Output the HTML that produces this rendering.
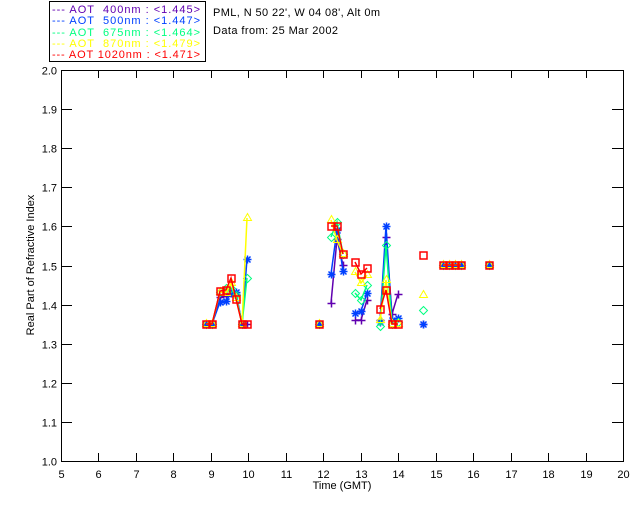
<!DOCTYPE html>
<html><head><meta charset="utf-8"><style>
body{margin:0;background:#fff;width:640px;height:512px;overflow:hidden}
svg{display:block}
text{font-family:"Liberation Sans",sans-serif;font-size:11px}
</style></head><body>
<svg id="s" width="640" height="512" xmlns="http://www.w3.org/2000/svg">
<rect x="49.5" y="1.5" width="156" height="60" fill="none" stroke="#000" stroke-width="1"/>
<g font-size="11">
<text x="52" y="13" fill="#6000b0" textLength="148" lengthAdjust="spacing">--- AOT&#160;&#160;400nm : &lt;1.445&gt;</text>
<text x="52" y="24" fill="#0040ff" textLength="148" lengthAdjust="spacing">--- AOT&#160;&#160;500nm : &lt;1.447&gt;</text>
<text x="52" y="36" fill="#00ff80" textLength="148" lengthAdjust="spacing">--- AOT&#160;&#160;675nm : &lt;1.464&gt;</text>
<text x="52" y="47" fill="#ffff00" textLength="148" lengthAdjust="spacing">--- AOT&#160;&#160;870nm : &lt;1.479&gt;</text>
<text x="52" y="58" fill="#ff0000" textLength="148" lengthAdjust="spacing">--- AOT 1020nm : &lt;1.471&gt;</text>
<text x="213" y="16" fill="#000" textLength="167" lengthAdjust="spacing">PML, N 50 22', W 04 08', Alt 0m</text>
<text x="213" y="34" fill="#000" textLength="125" lengthAdjust="spacing">Data from: 25 Mar 2002</text>
<text x="342" y="489" text-anchor="middle" fill="#000">Time (GMT)</text>
<text transform="translate(34,265) rotate(-90)" text-anchor="middle" fill="#000">Real Part of Refractive Index</text>
</g>
<g id="ax" stroke="#000" stroke-width="1" fill="none"></g>
<g id="lab" fill="#000"></g>
<g id="data"></g>
</svg>
<script>
var NS="http://www.w3.org/2000/svg";
function el(p,t,a,txt){var e=document.createElementNS(NS,t);for(var k in a)e.setAttribute(k,a[k]);if(txt)e.textContent=txt;p.appendChild(e);return e;}
var ax=document.getElementById('ax'),lab=document.getElementById('lab'),d=document.getElementById('data');
var L=61,R=623,T=70,B=461;
el(ax,'rect',{x:L+.5,y:T+.5,width:R-L,height:B-T});
for(var i=0;i<=15;i++){var x=Math.round(L+i*(R-L)/15)+.5;
 el(ax,'line',{x1:x,y1:B,x2:x,y2:B-8});el(ax,'line',{x1:x,y1:T,x2:x,y2:T+8});
 el(lab,'text',{x:x,y:478,'text-anchor':'middle'},String(5+i));}
for(var j=0;j<=10;j++){var y=Math.round(B-j*(B-T)/10)+.5;
 el(ax,'line',{x1:L,y1:y,x2:L+11,y2:y});el(ax,'line',{x1:R,y1:y,x2:R-11,y2:y});
 el(lab,'text',{x:57,y:y+4,'text-anchor':'end'},(1+j/10).toFixed(1));}
var S=[
{c:'#6000b0',m:'+',cl:[[[206,324],[212,324],[220,297],[226,296],[231,293],[236,294],[242,324],[247,324]],[[319,324]],[[331,303],[337,239],[343,265]],[[355,320],[361,320],[367,300]],[[380,320],[386,237],[392,314],[398,294]],[[423,324]],[[443,265],[449,265],[455,265],[461,265]],[[489,265]]]},
{c:'#0040ff',m:'*',cl:[[[206,324],[212,324],[220,302],[226,301],[231,293],[236,292],[242,324],[247,259]],[[319,324]],[[331,274],[337,230],[343,271]],[[355,313],[361,311],[367,293]],[[380,322],[386,226],[392,320],[398,318]],[[423,324]],[[443,265],[449,265],[455,265],[461,265]],[[489,265]]]},
{c:'#00ff80',m:'d',cl:[[[206,324],[212,324],[220,292],[226,288],[231,288],[236,295],[242,324],[247,278]],[[319,324]],[[331,237],[337,222],[343,254]],[[355,293],[361,300],[367,285]],[[380,326],[386,245],[392,324],[398,322]],[[423,310]],[[443,265],[449,265],[455,265],[461,265]],[[489,265]]]},
{c:'#ffff00',m:'t',cl:[[[206,324],[212,324],[220,292],[226,293],[231,283],[236,298],[242,324],[247,218]],[[319,324]],[[331,220],[337,240],[343,254]],[[355,272],[361,283],[367,275]],[[380,320],[386,280],[392,324],[398,324]],[[423,295]],[[443,265],[449,265],[455,265],[461,265]],[[489,265]]]},
{c:'#ff0000',m:'s',cl:[[[206,324],[212,324],[220,291],[226,290],[231,278],[236,299],[242,324],[247,324]],[[319,324]],[[331,226],[337,226],[343,254]],[[355,262],[361,274],[367,268]],[[380,309],[386,290],[392,324],[398,324]],[[423,255]],[[443,265],[449,265],[455,265],[461,265]],[[489,265]]]}
];
S.forEach(function(s){s.cl.forEach(function(c){
 if(c.length>1)el(d,'polyline',{points:c.map(function(p){return p.join(',')}).join(' '),fill:'none',stroke:s.c,'stroke-width':1.5});
 c.forEach(function(p){var x=p[0]+.5,y=p[1]+.5,g;
  if(s.m=='+')el(d,'path',{d:'M'+(x-4)+' '+y+'h8M'+x+' '+(y-4)+'v8',stroke:s.c,'stroke-width':1.5,fill:'none'});
  else if(s.m=='*')el(d,'path',{d:'M'+(x-4)+' '+y+'h8M'+x+' '+(y-4)+'v8M'+(x-3)+' '+(y-3)+'l6 6M'+(x+3)+' '+(y-3)+'l-6 6',stroke:s.c,'stroke-width':1.5,fill:'none'});
  else if(s.m=='d')el(d,'path',{d:'M'+x+' '+(y-4)+'l4 4l-4 4l-4-4z',stroke:s.c,'stroke-width':1,fill:'none'});
  else if(s.m=='t')el(d,'path',{d:'M'+x+' '+(y-5)+'l4 7h-8z',stroke:s.c,'stroke-width':1,fill:'none'});
  else el(d,'rect',{x:x-3.5,y:y-3.5,width:7,height:7,stroke:s.c,'stroke-width':1.5,fill:'none'});
 });});});
</script>
</body></html>
